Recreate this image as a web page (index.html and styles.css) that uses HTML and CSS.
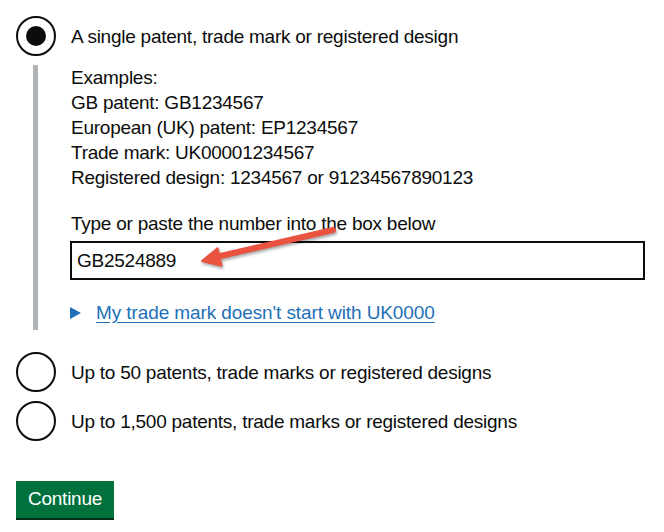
FILE: index.html
```html
<!DOCTYPE html>
<html lang="en">
<head>
<meta charset="utf-8">
<title>Patent search</title>
<link rel="stylesheet" href="styles.css">
</head>
<body>
<div class="page">
  <div class="radios">
    <div class="item">
      <span class="radio radio-checked"></span>
      <span class="label">A single patent, trade mark or registered design</span>
    </div>
    <div class="conditional">
      <p class="hint">Examples:<br>GB patent: GB1234567<br>European (UK) patent: EP1234567<br>Trade mark: UK00001234567<br>Registered design: 1234567 or 91234567890123</p>
      <label class="field-label" for="num">Type or paste the number into the box below</label>
      <input class="input" id="num" type="text" value="GB2524889">
      <div class="details">
        <span class="triangle"></span>
        <a class="link" href="#">My trade mark doesn't start with UK0000</a>
      </div>
    </div>
    <div class="item item-second">
      <span class="radio"></span>
      <span class="label">Up to 50 patents, trade marks or registered designs</span>
    </div>
    <div class="item item-third">
      <span class="radio"></span>
      <span class="label">Up to 1,500 patents, trade marks or registered designs</span>
    </div>
  </div>
  <button class="button" type="button">Continue</button>
  <svg class="annotation" width="664" height="532" viewBox="0 0 664 532">
    <g class="arrow">
      <line x1="333" y1="230" x2="214" y2="257.5" stroke="#e9533f" stroke-width="6" stroke-linecap="round"/>
      <polygon points="202,261 217.5,248.2 221.5,265.8" fill="#e9533f" stroke="#e9533f" stroke-width="2" stroke-linejoin="round"/>
    </g>
  </svg>
</div>
</body>
</html>
```
FILE: styles.css
```css
* { box-sizing: border-box; }
html, body { margin: 0; padding: 0; background: #ffffff; }
body {
  font-family: "Liberation Sans", Arial, sans-serif;
  font-size: 19px;
  letter-spacing: -0.25px;
  color: #0b0c0c;
}
.page {
  position: relative;
  width: 664px;
  height: 532px;
  padding: 16px 0 0 16px;
}
.radios { display: flex; flex-direction: column; }
.item {
  display: flex;
  align-items: center;
  gap: 15px;
  height: 40px;
}
.item-second { margin-top: 22px; }
.item-third { margin-top: 9px; }
.radio {
  position: relative;
  flex: 0 0 40px;
  width: 40px;
  height: 40px;
  border: 2px solid #0b0c0c;
  border-radius: 50%;
}
.radio-checked::after {
  content: "";
  position: absolute;
  left: 8px;
  top: 8px;
  width: 20px;
  height: 20px;
  border-radius: 50%;
  background: #0b0c0c;
}
.label { line-height: 25px; }
.conditional {
  margin: 9px 0 0 17px;
  border-left: 5px solid #b1b4b6;
  padding: 0 0 5px 32px;
  display: flex;
  flex-direction: column;
  align-items: flex-start;
}
.hint { margin: 0 0 21px 1px; line-height: 25px; }
.field-label { display: block; line-height: 25px; margin: 0 0 5px 1px; }
.input {
  width: 575px;
  height: 39px;
  border: 2px solid #0b0c0c;
  padding: 0 5px;
  font: inherit;
  letter-spacing: inherit;
  color: #0b0c0c;
  margin: 0;
}
.details {
  display: flex;
  align-items: center;
  gap: 15px;
  margin-top: 20px;
  height: 25px;
}
.triangle {
  width: 0;
  height: 0;
  border-top: 6px solid transparent;
  border-bottom: 6px solid transparent;
  border-left: 11px solid #1d70b8;
}
.link {
  color: #1d70b8;
  letter-spacing: -0.1px;
  text-decoration: underline;
  text-underline-offset: 3px;
  line-height: 25px;
}
.button {
  margin-top: 40px;
  padding: 0 12px 2px;
  background: #00703c;
  color: #ffffff;
  border: 0;
  box-shadow: 0 2px 0 #002d18;
  font: inherit;
  letter-spacing: inherit;
  line-height: 25px;
  height: 37px;
}
.annotation {
  position: absolute;
  left: 0;
  top: 0;
  pointer-events: none;
}
.arrow { filter: drop-shadow(1px 2px 1.5px rgba(0, 0, 0, 0.35)); }
```
